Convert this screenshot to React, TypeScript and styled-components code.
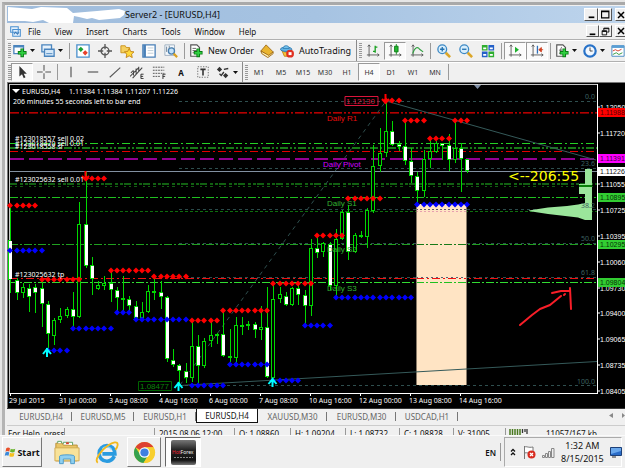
import React from "react";
import styled, { createGlobalStyle, css } from "styled-components";

const GlobalStyle = createGlobalStyle`
  * { box-sizing: border-box; }
  body { margin: 0; background: #f0f0f0; overflow-x: hidden; }
  body, button { font-family: "Noto Sans", "Open Sans", sans-serif; font-size: 8px; color: #111; }
  button { padding: 0; margin: 0; border: 0; background: none; white-space: nowrap; }
  svg { display: block; flex: none; }
`;

/* ---------- window frame ---------- */

const Desktop = styled.div`
  display: flex;
  flex-direction: column;
  min-height: 100vh;
  overflow: hidden;
`;

const Frame = styled.main`
  padding: 2px 0 0 2px;
  background: #e6e6e6;
`;

const Terminal = styled.div`
  border-top: 3px solid #a9a9a9;
  border-left: 3px solid #b4b4b4;
  padding: 1px 0 0 2px;
  background: #f0f0f0;
`;

const TitleBar = styled.header`
  display: flex;
  align-items: center;
  height: 17px;
  background: linear-gradient(90deg, #9fbcdc, #a6c3e2 50%, #bdd4ec);
`;

const Title = styled.h1`
  flex: 1;
  margin: 0;
  font-size: 9px;
  line-height: 17px;
  font-weight: 400;
  white-space: nowrap;
`;

const CaptionButton = styled.button<{ $size: number }>`
  display: flex;
  flex: none;
  align-items: center;
  justify-content: center;
  width: ${(p) => p.$size}px;
  height: ${(p) => p.$size - 1}px;
  background: #f0f0f0;
  border: 1px solid;
  border-color: #fff #555 #555 #fff;
  &:last-child { width: 10px; margin-left: 3px; border-right: 0; overflow: hidden; }
`;

const MenuBar = styled.nav`
  display: flex;
  align-items: center;
  height: 16px;
  padding-left: 3px;
`;

const MenuItems = styled.div`
  display: flex;
  flex: 1;
  gap: 14px;
  padding-left: 7px;
`;

/* ---------- toolbars ---------- */

const Toolbar = styled.div<{ $height: number }>`
  display: flex;
  align-items: center;
  height: ${(p) => p.$height}px;
  border-top: 1px solid #b0b0b0;
  box-shadow: inset 0 1px #fff;
`;

const Grip = styled.span<{ $edge?: boolean }>`
  flex: none;
  width: ${(p) => (p.$edge ? 6 : 4)}px;
  height: 100%;
  border-left: 1px solid ${(p) => (p.$edge ? "#8a8a8a" : "transparent")};
  padding: 3px 0 2px ${(p) => (p.$edge ? 2 : 0)}px;
  background: repeating-linear-gradient(#999 0 1px, transparent 1px 2px) content-box;
`;

const Separator = styled.span`
  flex: none;
  width: 1px;
  height: 16px;
  margin: 0 2px;
  background: #9a9a9a;
`;

const Tool = styled.button<{ $pressed?: boolean; $width?: number; $menu?: boolean }>`
  display: flex;
  flex: none;
  align-items: center;
  justify-content: ${(p) => (p.$menu || p.$width ? "flex-start" : "center")};
  gap: ${(p) => (p.$width ? 5 : 3)}px;
  width: ${(p) => p.$width ?? (p.$menu ? 28 : 22)}px;
  height: 18px;
  padding-left: ${(p) => (p.$menu || p.$width ? 2 : 0)}px;
  font-size: ${(p) => (p.$width ? 9 : 8)}px;
  ${(p) =>
    p.$pressed &&
    css`
      background: #fafafa;
      border: 1px solid;
      border-color: #999 #fff #fff #999;
    `}
`;

const Period = styled(Tool)`
  font-size: 7px;
  color: #333;
`;

/* ---------- tabs and status line ---------- */

const TabBar = styled.div`
  display: flex;
  align-items: flex-start;
  height: 17px;
  border-top: 1px solid #333;
  padding-left: 3px;
`;

const Tab = styled.button<{ $active?: boolean; $wide?: boolean }>`
  display: flex;
  flex: none;
  align-items: center;
  justify-content: center;
  width: ${(p) => (p.$wide ? 69 : 62)}px;
  height: 14px;
  color: #666;
  &::after {
    content: "";
    width: 1px;
    height: 9px;
    margin: 0 0 0 auto;
    background: #777;
  }
  &::before { content: ""; width: 1px; margin-right: auto; }
  ${(p) =>
    p.$active &&
    css`
      background: #fff;
      color: #111;
      border: 1px solid #111;
      border-top: 0;
      &::after { background: none; }
    `}
`;

const TabScroll = styled.div`
  display: flex;
  gap: 9px;
  margin-left: auto;
  padding-top: 4px;
`;

const StatusBar = styled.footer`
  display: flex;
  height: 10px;
  padding-top: 2px;
  overflow: hidden;
  border-top: 1px solid #ccc;
`;

const Cell = styled.span<{ $width: number; $grow?: boolean }>`
  flex: ${(p) => (p.$grow ? "1 0" : "0 0")} ${(p) => p.$width}px;
  height: 12px;
  padding-left: 4px;
  overflow: hidden;
  line-height: 12px;
  white-space: nowrap;
  border-right: 1px solid #999;
  &:first-child { padding-left: 1px; }
`;

const Traffic = styled.span`
  display: flex;
  flex: 0 0 119px;
  gap: 18px;
  padding-left: 3px;
  line-height: 12px;
`;

/* ---------- task bar ---------- */

const TaskBar = styled.footer`
  display: flex;
  align-items: center;
  flex: 1 0 34px;
  padding: 0 3px 0 2px;
  background: #efefef;
  border-top: 1px solid #fafafa;
  border-bottom: 1px solid #fff;
`;

const TaskButton = styled.button<{ $look: "raised" | "flat" | "active" }>`
  display: flex;
  flex: none;
  align-items: center;
  justify-content: center;
  width: 40px;
  height: 30px;
  ${(p) =>
    p.$look === "raised" &&
    css`
      width: 34px;
      border: 1px solid;
      border-color: #fff #777 #777 #fff;
    `}
  ${(p) =>
    p.$look === "active" &&
    css`
      width: 36px;
      margin-left: 4px;
      background: #fdfdfd;
      border: 1px solid;
      border-color: #666 #fff #fff #666;
    `}
`;

const StartButton = styled(TaskButton)`
  width: 40px;
  margin-right: 5px;
  gap: 1px;
  font-size: 9px;
  font-weight: 700;
`;

const Language = styled.button`
  height: 18px;
  margin-left: auto;
  padding-right: 4px;
  border-right: 1px solid #999;
  font-size: 8px;
  font-weight: 600;
`;

const Tray = styled.div`
  display: flex;
  align-items: center;
  width: 118px;
  height: 30px;
  margin-left: 3px;
  padding-left: 5px;
  gap: 6px;
  border: 1px solid;
  border-color: #aaa #fff #fff #aaa;
`;

const Clock = styled.time`
  flex: 1;
  font-size: 9px;
  line-height: 13px;
  text-align: center;
  white-space: nowrap;
`;

/* ---------- chart ---------- */

const ChartSvg = styled.svg`
  width: 100%;
  height: auto;
  background: #000;
`;

const ChartText = styled.text<{ $size?: number; $face?: string }>`
  font-family: ${(p) => p.$face ?? '"Noto Sans"'}, sans-serif;
  font-size: ${(p) => p.$size ?? 7}px;
`;

const ARIAL = '"Liberation Sans"';
const VERDANA = '"DejaVu Sans"';

/* Candle rows: high, body top, body bottom, low, filled (1) or hollow (0). */
const candles: number[][] = [
  [208, 240, 280, 293, 1], [278, 280, 293, 300, 1], [283, 287, 293, 298, 0], [284, 288, 297, 312, 1],
  [284, 287, 293, 313, 1], [281, 288, 304, 327, 1], [301, 304, 334, 353, 1], [318, 320, 336, 345, 0],
  [308, 316, 320, 323, 0], [307, 309, 316, 318, 0], [292, 309, 317, 328, 1], [202, 224, 317, 318, 0],
  [172, 224, 266, 268, 1], [257, 265, 279, 295, 1], [281, 285, 289, 290, 0], [276, 283, 286, 290, 0],
  [270, 283, 290, 302, 1], [287, 290, 298, 312, 1], [276, 298, 299, 312, 0], [296, 299, 306, 311, 1],
  [301, 306, 318, 318, 1], [302, 312, 318, 320, 0], [285, 291, 312, 313, 0], [277, 291, 292, 300, 0],
  [281, 292, 297, 309, 1], [296, 297, 359, 362, 1], [349, 360, 365, 367, 1], [364, 365, 371, 385, 1],
  [363, 371, 378, 383, 1], [320, 346, 378, 382, 0], [335, 346, 366, 383, 1], [338, 341, 366, 368, 0],
  [322, 335, 341, 347, 0], [333, 334, 335, 344, 0], [310, 334, 356, 357, 1], [329, 356, 358, 362, 1],
  [317, 325, 358, 363, 0], [317, 325, 326, 335, 0], [321, 324, 326, 330, 0], [322, 324, 330, 338, 1],
  [306, 327, 330, 340, 0], [287, 327, 377, 378, 1], [285, 299, 378, 380, 0], [287, 294, 299, 303, 0],
  [292, 296, 305, 306, 1], [287, 288, 305, 306, 0], [284, 288, 295, 305, 1], [290, 295, 306, 325, 1],
  [239, 248, 306, 316, 0], [235, 248, 253, 258, 1], [242, 243, 252, 257, 0], [242, 244, 286, 290, 1],
  [229, 239, 286, 296, 0], [210, 212, 239, 240, 0], [205, 212, 252, 260, 1], [233, 235, 252, 253, 0],
  [231, 235, 236, 238, 0], [208, 210, 237, 248, 0], [145, 166, 211, 213, 0], [128, 153, 166, 172, 0],
  [102, 131, 153, 157, 0], [121, 131, 145, 146, 1], [141, 144, 147, 151, 1], [120, 146, 161, 165, 1],
  [148, 161, 176, 183, 1], [172, 176, 191, 203, 1], [150, 159, 191, 197, 0], [138, 151, 159, 168, 0],
  [141, 143, 152, 153, 0], [143, 143, 146, 160, 1], [134, 145, 160, 171, 1], [121, 148, 160, 163, 0],
  [143, 148, 159, 192, 1], [159, 159, 171, 173, 1],
];

/* Level runs: first candle, last candle, y. */
const resistance = [
  [0, 4, 205], [12, 15, 178], [5, 11, 279], [16, 22, 270], [23, 28, 276], [29, 33, 320], [34, 41, 310],
  [42, 48, 283], [49, 53, 235], [54, 59, 198], [60, 62, 100], [63, 66, 120], [67, 70, 138], [71, 73, 120],
];
const support = [
  [0, 5, 250], [6, 9, 350], [10, 16, 328], [17, 19, 312], [20, 28, 319], [29, 34, 385], [35, 41, 364],
  [42, 46, 380], [47, 51, 325], [52, 64, 297], [65, 73, 204],
];

const candleX = (i: number) => 10.4 + i * 6.26;

const Diamonds = ({ runs, color }: { runs: number[][]; color: string }) => (
  <g fill={color}>
    {runs.flatMap(([from, to, y]) =>
      Array.from({ length: to - from + 1 }, (_, k) => {
        const x = Math.round(candleX(from + k));
        return <path key={`${from}-${k}`} d={`M${x - 3} ${y + 0.5}L${x} ${y - 2.5}L${x + 3} ${y + 0.5}L${x} ${y + 3.5}Z`} />;
      })
    )}
  </g>
);

const levels: [number, string, number, string, number][] = [
  [101, "#2f4f4f", 1, "3 3", 179],
  [112.5, "#b40000", 1, "9 2 2 2 2 2", 10],
  [113, "#700000", 1, "9 2 2 2 2 2", 10],
  [143, "#25d025", 1, "8 3 2 3", 10],
  [148, "#177a17", 2, "8 2 2 2 2 2", 10],
  [151, "#e00000", 1, "8 3 2 3", 10],
  [159, "#930093", 2, "14 5", 10],
  [168, "#2f4f4f", 1, "3 3", 179],
  [171, "#8290a0", 1, "", 10],
  [184, "#126012", 2, "7 3 3 2 3 1", 10],
  [186, "#126012", 1, "2 3 2 3 3 6", 10],
  [197, "#20c020", 1, "8 2 2 2", 10],
  [209, "#2a4a4a", 1, "3 3", 179],
  [211, "#0d700d", 1, "3 2", 10],
  [243, "#2f4f4f", 1, "3 3", 179],
  [244, "#20a020", 1, "8 2 2 2", 10],
  [277, "#2f4f4f", 1, "3 3", 179],
  [278, "#f01010", 1, "8 3 2 3", 10],
  [282, "#32dc32", 1, "8 2 2 2", 10],
  [385, "#2f4f4f", 1, "3 3", 179],
];

const priceTicks: [number, string][] = [
  [107, "1.12050"], [133, "1.11720"], [184, "1.11055"], [210, "1.10725"], [236, "1.10395"], [262, "1.10060"],
  [288, "1.09730"], [313, "1.09400"], [339, "1.09065"], [365, "1.08735"], [391, "1.08405"],
];
const priceTags: [number, string, string, string][] = [
  [112, "1.11988", "#ff0000", "#500"], [158, "1.11391", "#ff00ff", "#404"], [171, "1.11226", "#ffffff", "#111"],
  [197, "1.10895", "#32cd32", "#063006"], [244, "1.10295", "#32cd32", "#063006"], [282, "1.09804", "#32cd32", "#063006"],
];
const dates = [
  "29 Jul 2015", "31 Jul 00:00", "3 Aug 08:00", "4 Aug 16:00", "6 Aug 00:00",
  "7 Aug 08:00", "10 Aug 16:00", "12 Aug 00:00", "13 Aug 08:00", "14 Aug 16:00",
];
const fibs: [number, string][] = [
  [99, "0.0"], [166, "23.6"], [208, "38.2"], [241, "50.0"], [275, "61.8"], [384, "100.0"],
];
const pivots: [number, number, string, string][] = [
  [327, 121, "Daily R1", "#e80c0c"], [323, 167, "Daily Pivot", "#d000ff"], [327, 206, "Daily S1", "#32b432"],
  [327, 252, "Daily S2", "#32b432"], [327, 291, "Daily S3", "#32b432"],
];
const orders: [number, string][] = [
  [141, "#123018557 sell 0.02"], [146, "#123018470 sell 0.01"], [149, "#123018558 sl"],
  [182, "#123025632 sell 0.01"], [277, "#123025632 tp"],
];

const Chart = () => (
  <ChartSvg viewBox="7 82 618 326" role="img" aria-label="EURUSD H4 price chart">
    <path d="M7 82.5H625M7.5 82V408" stroke="#777" shapeRendering="crispEdges" />
    <g shapeRendering="crispEdges">
      {levels.map(([y, color, w, dash, x]) => (
        <path key={y} d={`M${x} ${w === 1 ? Math.floor(y) + 0.5 : y}H597`} stroke={color} strokeWidth={w} strokeDasharray={dash || undefined} />
      ))}
    </g>
    <rect x="416" y="204" width="50" height="181" fill="#ffe4c4" />
    <g shapeRendering="crispEdges">
      <path d="M416 209.500H466" stroke="#556" strokeDasharray="2 2" />
      <path d="M416 211.500H466" stroke="#e8a0b0" strokeDasharray="2 2" />
      <path d="M416 244.500H466" stroke="#177a17" strokeDasharray="8 2 2 2" />
      <path d="M416 277.500H466" stroke="#567" strokeDasharray="2 3" />
      <path d="M416 278.500H466" stroke="#f01010" strokeDasharray="8 3 2 3" />
      <path d="M416 282.500H466" stroke="#20c020" strokeDasharray="8 2 2 2" />
      <path d="M416.500 204V385M466.500 204V385" stroke="#887a68" />
    </g>
    <path d="M180 385L386 101" stroke="#2f4f4f" strokeDasharray="4 4" fill="none" />
    <path d="M386 101L596 160M180 385.500L597 361.500" stroke="#355a5a" fill="none" />

    <path
      fill="#9be59b"
      d="M585 169H592V220H585L578 217.500L548 214L535 212L529 211V210.500L535 209.500L548 207.500L567 206L578 204.500L585 203V194H579V184H585Z"
    />
    <path d="M579 186H592" stroke="#0a800a" strokeWidth="2" />
    <path d="M9.500 393.500V84.500H597" stroke="#c8c8c8" fill="none" shapeRendering="crispEdges" />
    <path d="M9 393.500H597.500M597 84V394" stroke="#fff" fill="none" shapeRendering="crispEdges" />
    <path d="M474 85H481L477.500 89Z" fill="#8090a8" />

    <g shapeRendering="crispEdges">
      {candles.map(([high, top, bottom, low, filled], i) => {
        const x = Math.round(candleX(i));
        return (
          <g key={i} stroke="#00d800" fill={filled ? "#fff" : "#000"}>
            <path d={`M${x + 0.5} ${high}V${low}`} />
            <rect x={x - 1.5} y={top + 0.5} width={i === 0 ? 2 : 3} height={Math.max(bottom - top - 1, 0.5)} />
            {filled && bottom - top > 2 ? <path d={`M${x + 0.5} ${top + 1}V${bottom - 1}`} stroke="#fff" strokeWidth="2" /> : null}
          </g>
        );
      })}
    </g>
    {pivots.map(([x, y, label, color]) => (
      <ChartText key={label} x={x} y={y} fill={color} $size={8} $face={ARIAL}>{label}</ChartText>
    ))}
    <Diamonds runs={resistance} color="#ff0000" />
    <Diamonds runs={support} color="#0000ff" />
    <g stroke="#ff0000" strokeWidth="2" fill="none">
      <path d="M85.500 171V180M82 176L85.500 180L89 176" />
      <path d="M385.500 94V103M382 99L385.500 103L389 99" />
    </g>
    <g stroke="#00ffff" strokeWidth="2" fill="none">
      {[[47, 348], [178.5, 382], [272.5, 378]].map(([x, y]) => (
        <path key={x} d={`M${x} ${y + 9}V${y}M${x - 4} ${y + 6}L${x} ${y + 1}L${x + 4} ${y + 6}`} />
      ))}
    </g>

    <path d="M345 96.500H378V105.500H345Z" stroke="#dc143c" fill="none" />
    <ChartText x="346" y="104" fill="#dc143c" $size={8} $face={ARIAL}>1.12130</ChartText>
    <path d="M138.500 381.500H171.500V390.500H138.500Z" stroke="#006400" fill="none" />
    <ChartText x="140" y="389" fill="#0a820a" $size={8} $face={ARIAL}>1.08477</ChartText>

    <path d="M12 89H20L16 93Z" fill="#fff" />
    <g fill="#fff">
      <ChartText x="22" y="94">EURUSD,H4</ChartText>
      <ChartText x="69" y="94">1.11384 1.11384 1.11207 1.11226</ChartText>
      <ChartText x="13" y="104">206 minutes 55 seconds left to bar end</ChartText>
      {orders.map(([y, label]) => (
        <ChartText key={label} x="15" y={y}>{label}</ChartText>
      ))}
      {dates.map((label, i) => (
        <g key={label}>
          <path d={`M${10 + i * 50} 393H${11 + i * 50}V396H${10 + i * 50}Z`} />
          <ChartText x={9 + i * 50} y="403">{label}</ChartText>
        </g>
      ))}
      {priceTicks.map(([y, label]) => (
        <g key={label}>
          <path d={`M597 ${y - 0.5}H600V${y + 0.5}H597Z`} />
          <ChartText x="600" y={y + 2.5} $face={ARIAL}>{label}</ChartText>
        </g>
      ))}
    </g>
    {priceTags.map(([y, label, bg, fg]) => (
      <g key={label}>
        <rect x="598" y={y - 4} width="27" height="9" fill={bg} />
        <ChartText x="600" y={y + 3} fill={fg} $face={ARIAL}>{label}</ChartText>
      </g>
    ))}
    {fibs.map(([y, label]) => (
      <ChartText key={label} x="595" y={y} fill="#3c6060" textAnchor="end">{label}</ChartText>
    ))}
    <ChartText x="508" y="181" fill="#ffff00" $size={14} $face={VERDANA}>{"<--206:55"}</ChartText>
    <path
      d="M520 325L532 315L540 309L550 305L561 296M564 295L565 294M552 293L561 291L570 291M570 288L571 309"
      stroke="#f81e28" strokeWidth="2" strokeLinecap="round" strokeLinejoin="round" fill="none"
    />
  </ChartSvg>
);

/* ---------- icons ---------- */

const Icon = ({ children, size = 14 }: { children: React.ReactNode; size?: number }) => (
  <svg width={size} height={size} viewBox="0 0 16 16" fill="none" aria-hidden="true">{children}</svg>
);
const Caret = () => (
  <svg width="5" height="3" viewBox="0 0 5 3" aria-hidden="true"><path d="M0 0H5L2.500 3Z" fill="#111" /></svg>
);
const Plus = () => <path d="M10.500 5V15M5.500 10H15.500" stroke="#0a7a14" strokeWidth="4" />;
const PlusLight = () => <path d="M10.500 6V14M6.500 10H14.500" stroke="#2fd040" strokeWidth="2" />;
const Axes = () => <path d="M3.500 1V14.500M1 12.500H15M2 3L3.500 1L5 3M13 11L15 12.500L13 14" stroke="#555" />;

const icons = {
  newChart: <><path d="M1 2H12V11H1Z" fill="#fff" stroke="#4a84bd" strokeWidth="1.500" /><path d="M1 3H12" stroke="#4a84bd" strokeWidth="2" /><Plus /><PlusLight /></>,
  profiles: <><path d="M1 1H12V9H1Z" fill="#e8f2fb" stroke="#4a84bd" strokeWidth="1.500" /><path d="M4 6H15V14H4Z" fill="#d5e8f8" stroke="#4a84bd" strokeWidth="1.500" /><path d="M6 11H13" stroke="#4a84bd" /></>,
  market: <><path d="M1 1H15V15H1Z" fill="#fff" stroke="#4a90cc" strokeWidth="1.500" /><path d="M5.500 3L8.500 6L5.500 9L2.500 6Z" fill="#18a030" /><path d="M10.500 7L13.500 10L10.500 13L7.500 10Z" fill="#e8402a" /></>,
  cross: <><circle cx="8" cy="8" r="4.500" stroke="#555" strokeWidth="1.500" /><path d="M8 0V6M8 10V16M0 8H6M10 8H16" stroke="#555" strokeWidth="1.500" /></>,
  favorites: <><path d="M1 2H6L7 4H11V10H1Z" fill="#f5d060" stroke="#c89018" /><path d="M10.500 5L12.200 8.500L16 9L13.200 11.500L14 15.500L10.500 13.500L7 15.500L7.800 11.500L5 9L8.800 8.500Z" fill="#ffd93a" stroke="#c08010" /></>,
  navigator: <><path d="M1 1H15V15H1Z" fill="#fff" stroke="#4a80b8" strokeWidth="1.500" /><path d="M3 1V15" stroke="#4a80b8" strokeWidth="3" /><path d="M6.500 4.500H13M6.500 7.500H13M6.500 10.500H13" stroke="#b8c8d4" /></>,
  tester: <><path d="M1 1H12V13H1Z" fill="#f4f8fc" stroke="#9ab" /><path d="M3 3V9M6 2V7M9 4V8" stroke="#678" /><circle cx="8.500" cy="8" r="3.500" fill="#c5e2f8" stroke="#4a80b0" strokeWidth="1.500" /><path d="M11 11L15 15" stroke="#d8a020" strokeWidth="2.500" /></>,
  order: <><path d="M2 1H9L12 4V14H2Z" fill="#fff" stroke="#555" strokeWidth="1.300" /><path d="M4 5H8M4 7.500H9M4 10H6" stroke="#555" /><Plus /><PlusLight /></>,
  book: <><path d="M1 8L7 1L15 9L10 14Z" fill="#eab52f" stroke="#9a6410" /><path d="M1 8L2 11L9 15.500L15 11V9L10 13Z" fill="#fff0b0" stroke="#9a6410" /></>,
  auto: <><path d="M2 7C4 10 10 10 13 7L9 14H5Z" fill="#f5c53a" stroke="#c08010" /><ellipse cx="7" cy="6" rx="6.500" ry="2.500" fill="#62b6e6" stroke="#2a78b0" /><path d="M3.500 5C3.500 1 10.500 1 10.500 5Z" fill="#7cc8f0" stroke="#2a78b0" /><circle cx="11.500" cy="11" r="4.500" fill="#e03020" /><path d="M9.800 9.300H13.200V12.700H9.800Z" fill="#fff" /></>,
  bars: <><Axes /><path d="M10.500 2V10M8 8.500H10.500M10.500 3.500H13" stroke="#18a020" strokeWidth="1.500" /></>,
  candle: <><Axes /><path d="M9.500 0V12" stroke="#0a8a14" /><path d="M7.500 2.500H11.500V9H7.500Z" fill="#22b830" stroke="#0a7a14" /></>,
  line: <><Axes /><path d="M3 11C6 3 9 3 11 6L15 9" stroke="#30a040" strokeWidth="1.300" /></>,
  zoomIn: <><circle cx="6" cy="6" r="5" fill="#d8eefc" stroke="#3c88c4" strokeWidth="1.500" /><path d="M3.500 6H8.500M6 3.500V8.500" stroke="#2070b0" strokeWidth="1.500" /><path d="M10 10L15 15" stroke="#dca628" strokeWidth="3" /></>,
  zoomOut: <><circle cx="6" cy="6" r="5" fill="#d8eefc" stroke="#3c88c4" strokeWidth="1.500" /><path d="M3.500 6H8.500" stroke="#2070b0" strokeWidth="1.500" /><path d="M10 10L15 15" stroke="#dca628" strokeWidth="3" /></>,
  tile: <><path d="M1 1H7.500V7.500H1ZM8.500 8.500H15V15H8.500Z" fill="#2fae30" /><path d="M8.500 1H15V7.500H8.500ZM1 8.500H7.500V15H1Z" fill="#2460c8" /><path d="M2.500 4H6V6H2.500ZM10 4H13.500V6H10ZM2.500 11.500H6V13.500H2.500ZM10 11.500H13.500V13.500H10Z" fill="#fff" /></>,
  scroll: <><Axes /><path d="M8 3L12.500 6.500L8 10Z" fill="#1cb02c" /></>,
  shift: <><Axes /><path d="M8.500 2V11" stroke="#3070b8" strokeWidth="1.500" /><path d="M15 6.500H11M13 4L10 6.500L13 9Z" fill="#d04020" stroke="#d04020" /></>,
  indicator: <><path d="M2 1H9L12 4V14H2Z" fill="#fff" stroke="#555" strokeWidth="1.300" /><path d="M8 3.500C6 3.500 7 11 4.500 11M4.500 7H8" stroke="#555" /><Plus /><PlusLight /></>,
  clock: <><circle cx="8" cy="8" r="6.500" fill="#f2f8ff" stroke="#2872c8" strokeWidth="2.500" /><path d="M8 4V8H11" stroke="#333" /></>,
  template: <><path d="M1 2H15V14H1Z" fill="#fff" stroke="#3c84c0" /><path d="M1 3H15" stroke="#5a9ed4" strokeWidth="3" /><path d="M2 8L5 6.500L8 8L12 6" stroke="#d03020" /><path d="M2 12L6 10L9 12L13 10" stroke="#209030" /></>,
  cursor: <path d="M5 1V13L8 10.500L10 15L12 14L10 10H13.500Z" fill="#333" />,
  plusThin: <path d="M8 0V6.500M8 9.500V16M0 8H6.500M9.500 8H16" stroke="#555" strokeWidth="1.200" />,
  vline: <path d="M8 2V14" stroke="#444" strokeWidth="1.200" />,
  hline: <path d="M2 8H14" stroke="#444" strokeWidth="1.200" />,
  trend: <path d="M2 14L14 3" stroke="#555" strokeWidth="1.200" />,
  channel: <><path d="M0 13L10 3M3 15L14 3M1 9L4 6M4 7V12M7 4V11M10 2V8" stroke="#444" strokeWidth="1.200" /><path d="M15.500 10.500H12.500V15.500H15.500M12.500 13H15" stroke="#222" /></>,
  fib: <><path d="M1 2.500H14M1 6H14M1 9.500H14M1 13H10" stroke="#444" strokeDasharray="2 1" /><path d="M15.500 10.500H12.500V16M12.500 13H15" stroke="#222" /></>,
  label: <><path d="M2 2H14V14H2Z" stroke="#666" strokeDasharray="1.500 1.500" /><path d="M5 5H11M8 5V12" stroke="#333" strokeWidth="1.800" /></>,
  shapes: <><path d="M4 2L7 5L4 8L1 5ZM11 9L14 12L11 15L8 12Z" fill="#333" /><path d="M4 10L6 12L9 8M9 5L14 4" stroke="#333" strokeWidth="1.500" /></>,
};

type IconName = keyof typeof icons;

const IconTool = ({ name, label, pressed, menu }: { name: IconName; label: string; pressed?: boolean; menu?: boolean }) => (
  <Tool aria-label={label} $pressed={pressed} $menu={menu}>
    <Icon>{icons[name]}</Icon>
    {menu && <Caret />}
  </Tool>
);

const CaptionButtons = ({ size, restore }: { size: number; restore?: boolean }) => (
  <>
    <CaptionButton $size={size} aria-label="Minimize"><Icon size={9}><path d="M3 13H13" stroke="#000" strokeWidth="3" /></Icon></CaptionButton>
    <CaptionButton $size={size} aria-label={restore ? "Restore" : "Maximize"}>
      <Icon size={9}>
        {restore ? <path d="M5 6V2H14V9H11M2 6.500H10V14H2ZM5 3H14M2 8H10" stroke="#000" strokeWidth="1.600" /> : <path d="M1 2H14V14H1ZM1 3H14" stroke="#000" strokeWidth="2" />}
      </Icon>
    </CaptionButton>
    <CaptionButton $size={size} aria-label="Close"><Icon size={8}><path d="M2 2L14 14M14 2L2 14" stroke="#000" strokeWidth="3" /></Icon></CaptionButton>
  </>
);

export default function App() {
  return (
    <>
      <GlobalStyle />
      <Desktop>
        <Frame>
          <Terminal>
            <TitleBar>
              <svg width="118" height="17" viewBox="0 0 118 17" aria-hidden="true">
                <path d="M1 1L25 3L34 1L60 2L66 7L78 6L90 5L112 3L118 5L117 9L113 12L92 14L85 12L80 13L72 11L67 10L66 17L42 17L36 14L26 16L18 15L8 15L1 15Z" fill="#fff" />
              </svg>
              <Title>Server2 - [EURUSD,H4]</Title>
              <CaptionButtons size={14} />
            </TitleBar>
            <MenuBar>
              <Icon size={11}>
                <path d="M1 1H12V9H1ZM4 5H15V15H4Z" fill="#e4f1fc" stroke="#4a90d0" strokeWidth="1.500" />
                <path d="M6 12L8 9L11 12L13 9" stroke="#3878b8" strokeWidth="1.500" />
              </Icon>
              <MenuItems>
                {["File", "View", "Insert", "Charts", "Tools", "Window", "Help"].map((m) => <button key={m}>{m}</button>)}
              </MenuItems>
              <CaptionButtons size={13} restore />
            </MenuBar>
            <Toolbar $height={22}>
              <Grip />
              <IconTool name="newChart" label="New chart" menu />
              <IconTool name="profiles" label="Profiles" menu />
              <Separator />
              <IconTool name="market" label="Market watch" />
              <IconTool name="cross" label="Data window" />
              <IconTool name="favorites" label="Navigator" />
              <IconTool name="navigator" label="Terminal" />
              <IconTool name="tester" label="Strategy tester" />
              <Separator />
              <Tool $width={69}><Icon>{icons.order}</Icon>New Order</Tool>
              <IconTool name="book" label="MetaEditor" />
              <Tool $width={78}><Icon>{icons.auto}</Icon>AutoTrading</Tool>
              <Grip $edge />
              <IconTool name="bars" label="Bar chart" />
              <IconTool name="candle" label="Candlesticks" pressed />
              <IconTool name="line" label="Line chart" />
              <Separator />
              <IconTool name="zoomIn" label="Zoom in" />
              <IconTool name="zoomOut" label="Zoom out" />
              <IconTool name="tile" label="Tile windows" />
              <Separator />
              <IconTool name="scroll" label="Auto scroll" pressed />
              <IconTool name="shift" label="Chart shift" pressed />
              <Separator />
              <IconTool name="indicator" label="Indicators" menu />
              <IconTool name="clock" label="Periods" menu />
              <IconTool name="template" label="Templates" menu />
            </Toolbar>
            <Toolbar $height={21}>
              <Grip />
              <IconTool name="cursor" label="Cursor" pressed />
              <IconTool name="plusThin" label="Crosshair" />
              <Separator />
              <IconTool name="vline" label="Vertical line" />
              <IconTool name="hline" label="Horizontal line" />
              <IconTool name="trend" label="Trendline" />
              <IconTool name="channel" label="Channel" />
              <IconTool name="fib" label="Fibonacci" />
              <Tool aria-label="Text"><b>A</b></Tool>
              <IconTool name="label" label="Text label" />
              <IconTool name="shapes" label="Arrows" menu />
              <Grip $edge />
              {["M1", "M5", "M15", "M30", "H1", "H4", "D1", "W1", "MN"].map((p) => (
                <Period key={p} $pressed={p === "H4"}>{p}</Period>
              ))}
              <Separator />
            </Toolbar>
            <Chart />
            <TabBar>
              <Tab>EURUSD,H4</Tab>
              <Tab>EURUSD,M5</Tab>
              <Tab>EURUSD,H1</Tab>
              <Tab $active>EURUSD,H4</Tab>
              <Tab $wide>XAUUSD,M30</Tab>
              <Tab $wide>EURUSD,M30</Tab>
              <Tab>USDCAD,H1</Tab>
              <TabScroll>
                <svg width="4" height="5" viewBox="0 0 4 5" aria-hidden="true"><path d="M4 0V5L0 2.500Z" fill="#888" /></svg>
                <svg width="3" height="5" viewBox="0 0 3 5" aria-hidden="true"><path d="M0 0V5L3 2.500Z" fill="#888" /></svg>
              </TabScroll>
            </TabBar>
            <StatusBar>
              <Cell $width={58}>For Help, press F1</Cell>
              <Cell $width={90} $grow />
              <Cell $width={80}>2015.08.06 12:00</Cell>
              <Cell $width={56}>O: 1.08860</Cell>
              <Cell $width={55}>H: 1.09204</Cell>
              <Cell $width={54}>L: 1.08732</Cell>
              <Cell $width={54}>C: 1.08828</Cell>
              <Cell $width={52}>V: 31005</Cell>
              <Traffic>
                <svg width="19" height="9" viewBox="0 0 19 9" aria-hidden="true">
                  <path d="M1 1V9M3.500 1V9M6 1V9M8.500 1V9M11 1V9" stroke="#4a7a20" strokeWidth="1.500" />
                  <path d="M13.500 1V5M16 1V4M18 1V6" stroke="#333" strokeWidth="1.300" />
                </svg>
                11057/167 kb
              </Traffic>
            </StatusBar>
          </Terminal>
        </Frame>
        <TaskBar>
          <StartButton $look="raised">
            <svg width="12" height="12" viewBox="0 0 16 16" aria-hidden="true">
              <path d="M3 3C5 1 7 2 8 3L7 7.500C5 6 4 6.500 2 7.500Z" fill="#e8502a" />
              <path d="M9 3.500C11 5 13 4.500 15 3.500L14 8C12 9 10 8.500 8 7.500Z" fill="#6ab42c" />
              <path d="M2 8.500C4 7.500 5 7.500 7 8.500L6 13C4 12 3 12 1 13Z" fill="#3a88d8" />
              <path d="M8 9C10 10 12 10 14 9L13 13.500C11 14.500 9 14.500 7 13.500Z" fill="#f5c020" />
            </svg>
            Start
          </StartButton>
          <TaskButton $look="flat" aria-label="Explorer">
            <svg width="26" height="25" viewBox="0 0 28 26" aria-hidden="true">
              <path d="M2 3H9L10 5H25V22H2Z" fill="#e9c566" stroke="#b98e34" />
              <path d="M4 3V1H8V3M10 4V2H20V5" fill="#fff" stroke="#58a060" />
              <path d="M13 3H16" stroke="#d84030" strokeWidth="2" />
              <path d="M1 8H27V22H1Z" fill="#f8e39a" stroke="#d0aa50" />
              <path d="M6 25V17C6 15 22 15 22 17V25H18V20H10V25Z" fill="#8fd0f0" stroke="#4a98c8" />
            </svg>
          </TaskButton>
          <TaskButton $look="flat" aria-label="Internet Explorer">
            <svg width="24" height="25" viewBox="0 0 26 26" fill="none" aria-hidden="true">
              <path d="M21 17C19 21 16 22.500 13 22.500C8 22.500 4.500 18.500 4.500 14C4.500 9 8.500 5.500 13 5.500C18 5.500 21.500 9 21.500 14.500H8" stroke="#2a9be0" strokeWidth="4" />
              <path d="M8 9C10 6 16 6 18 10" stroke="#8bd8ff" strokeWidth="1.500" />
              <path d="M3 24C-1 21 6 11 14 5.500C19 2 25 0 24.500 5C24.300 7 23 9 22 10" stroke="#f2b91e" strokeWidth="2" />
            </svg>
          </TaskButton>
          <TaskButton $look="raised" aria-label="Chrome">
            <svg width="23" height="23" viewBox="0 0 24 24" aria-hidden="true">
              <circle cx="12" cy="12" r="11" fill="#f8cf2e" />
              <path d="M12 12L2.500 6.500A11 11 0 0 1 21.500 6.500H12Z" fill="#dd4132" />
              <path d="M2.500 6.500A11 11 0 0 0 11 23L16 14.500L12 12L7.500 14Z" fill="#35a14e" />
              <path d="M12 6.500H21.500A11 11 0 0 1 11 23L16.500 14Z" fill="#f8cf2e" />
              <circle cx="12" cy="12" r="5.500" fill="#fff" />
              <circle cx="12" cy="12" r="4.300" fill="#3f80e0" />
            </svg>
          </TaskButton>
          <TaskButton $look="active" aria-label="HotForex terminal">
            <svg width="25" height="25" viewBox="0 0 25 25" aria-hidden="true">
              <defs>
                <linearGradient id="gloss" x1="0" y1="0" x2="0" y2="1">
                  <stop offset="0" stopColor="#777" /><stop offset=".4" stopColor="#222" /><stop offset=".8" stopColor="#111" /><stop offset="1" stopColor="#777" />
                </linearGradient>
              </defs>
              <rect width="25" height="25" rx="2" fill="url(#gloss)" />
              <ChartText x="1" y="14" fill="#f02030" $size={5}>Hot<tspan fill="#eee">Forex</tspan></ChartText>
              <path d="M3 17.500H22" stroke="#888" strokeDasharray="2 1" />
            </svg>
          </TaskButton>
          <Language>EN</Language>
          <Tray>
            <svg width="6" height="8" viewBox="0 0 6 8" fill="none" aria-hidden="true"><path d="M1 3.500L3 1.500L5 3.500M1 7L3 5L5 7" stroke="#111" strokeWidth="1.300" /></svg>
            <svg width="14" height="14" viewBox="0 0 14 14" fill="none" aria-hidden="true">
              <path d="M2.500 1V14M2.500 2C5 1 6 3 11 2V8C7 9 5 7 2.500 8" fill="#fff" stroke="#777" />
              <circle cx="9.500" cy="9.500" r="4" fill="#d82c20" />
              <path d="M8 8L11 11M11 8L8 11" stroke="#fff" strokeWidth="1.300" />
            </svg>
            <svg width="13" height="11" viewBox="0 0 13 11" fill="#eee" stroke="#888" aria-hidden="true">
              <path d="M.5 8.500H2.500V10.500H.5ZM3.500 6.500H5.500V10.500H3.500ZM6.500 4.500H8.500V10.500H6.500ZM9.500 1.500H12V10.500H9.500Z" />
            </svg>
            <Clock>1:32 AM<br />8/15/2015</Clock>
            <svg width="12" height="12" viewBox="0 0 12 12" aria-hidden="true">
              <path d="M.5 1.500H11.500V9.500H.5Z" fill="#2a6cc8" stroke="#1c4078" /><path d="M1 2H11V5L1 8Z" fill="#6aa8ec" /><path d="M2 11H6" stroke="#333" />
            </svg>
          </Tray>
        </TaskBar>
      </Desktop>
    </>
  );
}
